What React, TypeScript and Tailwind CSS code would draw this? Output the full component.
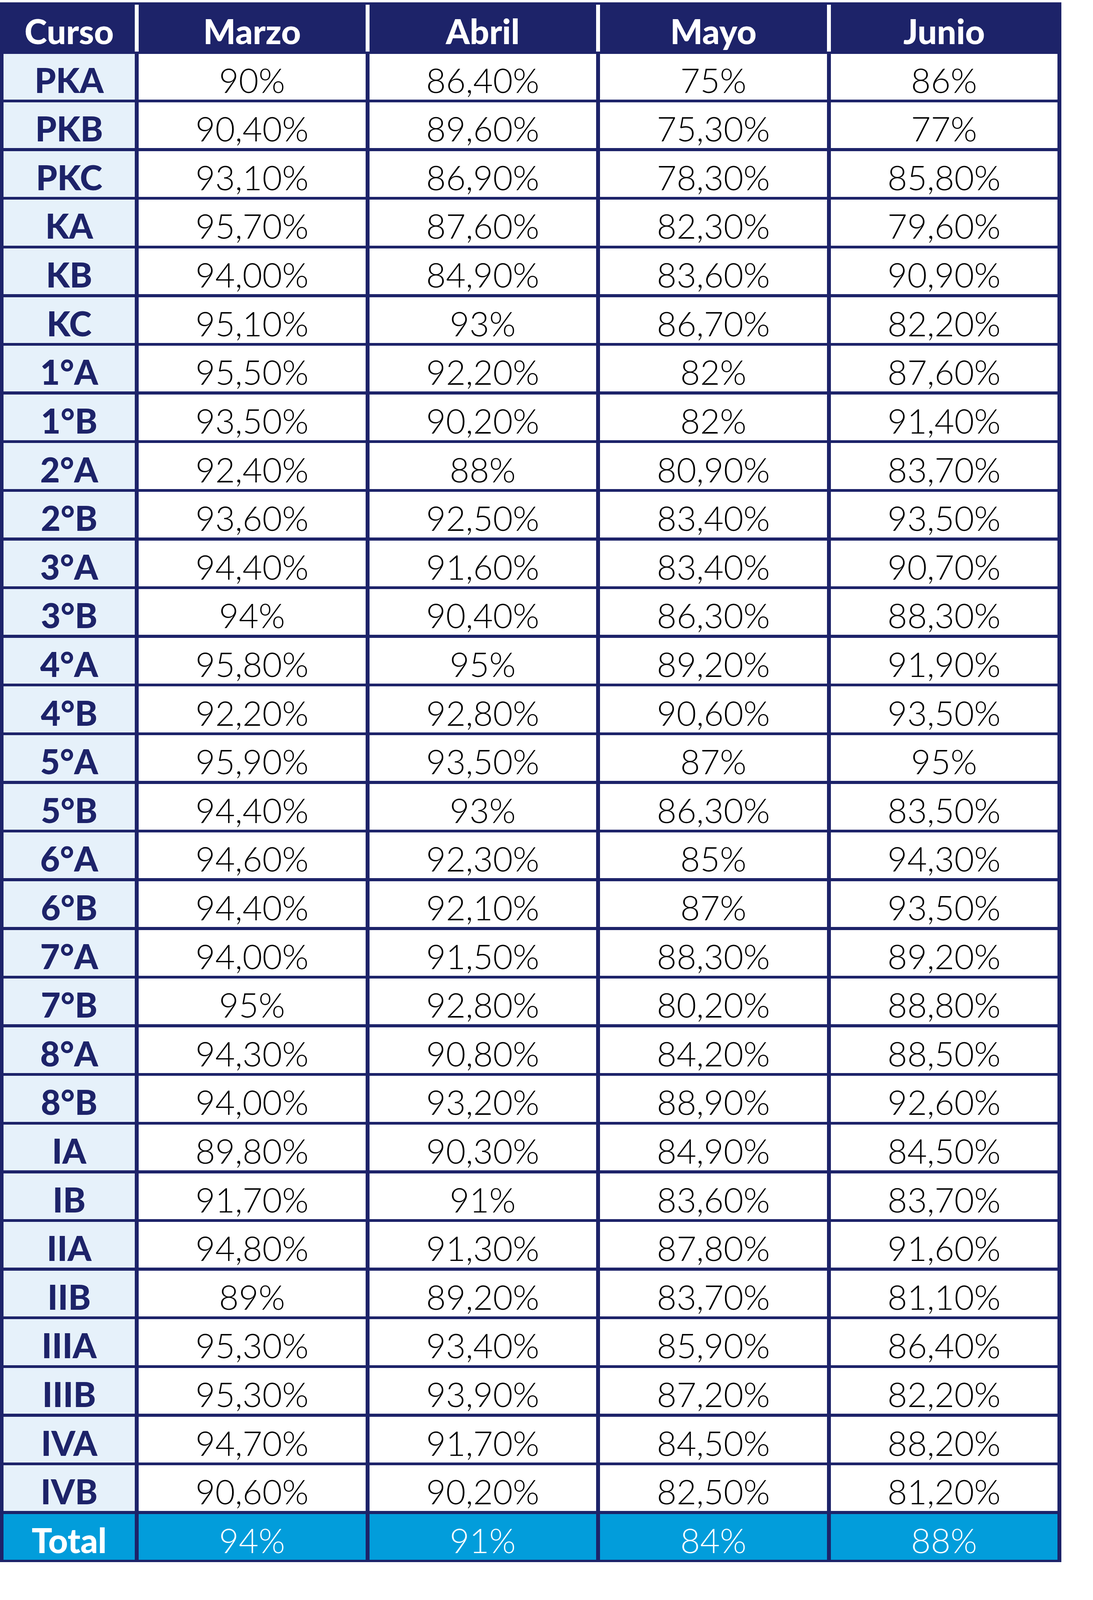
const months = ["Marzo", "Abril", "Mayo", "Junio"];

const rows: string[][] = [
  ["PKA", "90%", "86,40%", "75%", "86%"],
  ["PKB", "90,40%", "89,60%", "75,30%", "77%"],
  ["PKC", "93,10%", "86,90%", "78,30%", "85,80%"],
  ["KA", "95,70%", "87,60%", "82,30%", "79,60%"],
  ["KB", "94,00%", "84,90%", "83,60%", "90,90%"],
  ["KC", "95,10%", "93%", "86,70%", "82,20%"],
  ["1°A", "95,50%", "92,20%", "82%", "87,60%"],
  ["1°B", "93,50%", "90,20%", "82%", "91,40%"],
  ["2°A", "92,40%", "88%", "80,90%", "83,70%"],
  ["2°B", "93,60%", "92,50%", "83,40%", "93,50%"],
  ["3°A", "94,40%", "91,60%", "83,40%", "90,70%"],
  ["3°B", "94%", "90,40%", "86,30%", "88,30%"],
  ["4°A", "95,80%", "95%", "89,20%", "91,90%"],
  ["4°B", "92,20%", "92,80%", "90,60%", "93,50%"],
  ["5°A", "95,90%", "93,50%", "87%", "95%"],
  ["5°B", "94,40%", "93%", "86,30%", "83,50%"],
  ["6°A", "94,60%", "92,30%", "85%", "94,30%"],
  ["6°B", "94,40%", "92,10%", "87%", "93,50%"],
  ["7°A", "94,00%", "91,50%", "88,30%", "89,20%"],
  ["7°B", "95%", "92,80%", "80,20%", "88,80%"],
  ["8°A", "94,30%", "90,80%", "84,20%", "88,50%"],
  ["8°B", "94,00%", "93,20%", "88,90%", "92,60%"],
  ["IA", "89,80%", "90,30%", "84,90%", "84,50%"],
  ["IB", "91,70%", "91%", "83,60%", "83,70%"],
  ["IIA", "94,80%", "91,30%", "87,80%", "91,60%"],
  ["IIB", "89%", "89,20%", "83,70%", "81,10%"],
  ["IIIA", "95,30%", "93,40%", "85,90%", "86,40%"],
  ["IIIB", "95,30%", "93,90%", "87,20%", "82,20%"],
  ["IVA", "94,70%", "91,70%", "84,50%", "88,20%"],
  ["IVB", "90,60%", "90,20%", "82,50%", "81,20%"],
];

const totals = ["94%", "91%", "84%", "88%"];

// sizes are kept relative to the window height so the whole table fits the frame
const cell = "flex items-center justify-center pt-[0.4vh]";

export default function App() {
  return (
    <div className="h-screen overflow-hidden bg-white pt-[0.146vh] font-['Lato',sans-serif] text-[calc(50px+0.9128vh)] leading-none">
      <div className="w-[2717px] bg-[#1d2369] pr-[10px] pb-[0.146vh] pl-[9px]">
        {/* header */}
        <div className="grid h-[3.2129vh] grid-cols-[336px_10px_1fr_10px_1fr_10px_1fr_10px_1fr]">
          <div className={cell + " font-black text-white"}>Curso</div>
          {months.map((m) => [
            <div key={m + "-line"} className="my-[0.146vh] bg-white" />,
            <div key={m} className={cell + " font-black text-white"}>
              {m}
            </div>,
          ])}
        </div>

        {/* body */}
        <div className="grid auto-rows-[2.86vh] grid-cols-[336px_repeat(4,1fr)] gap-x-[10px] gap-y-[0.1826vh]">
          {rows.map((r) => [
            <div key={r[0]} className={cell + " bg-[#e6f1fa] font-black text-[#1d2369]"}>
              {r[0]}
            </div>,
            ...r.slice(1).map((v, i) => (
              <div key={r[0] + i} className={cell + " bg-white font-light text-black"}>
                {v}
              </div>
            )),
          ])}
          <div className={cell + " bg-[#029ddb] font-black text-white"}>Total</div>
          {totals.map((t, i) => (
            <div key={"t" + i} className={cell + " bg-[#029ddb] font-light text-white"}>
              {t}
            </div>
          ))}
        </div>
      </div>
    </div>
  );
}
